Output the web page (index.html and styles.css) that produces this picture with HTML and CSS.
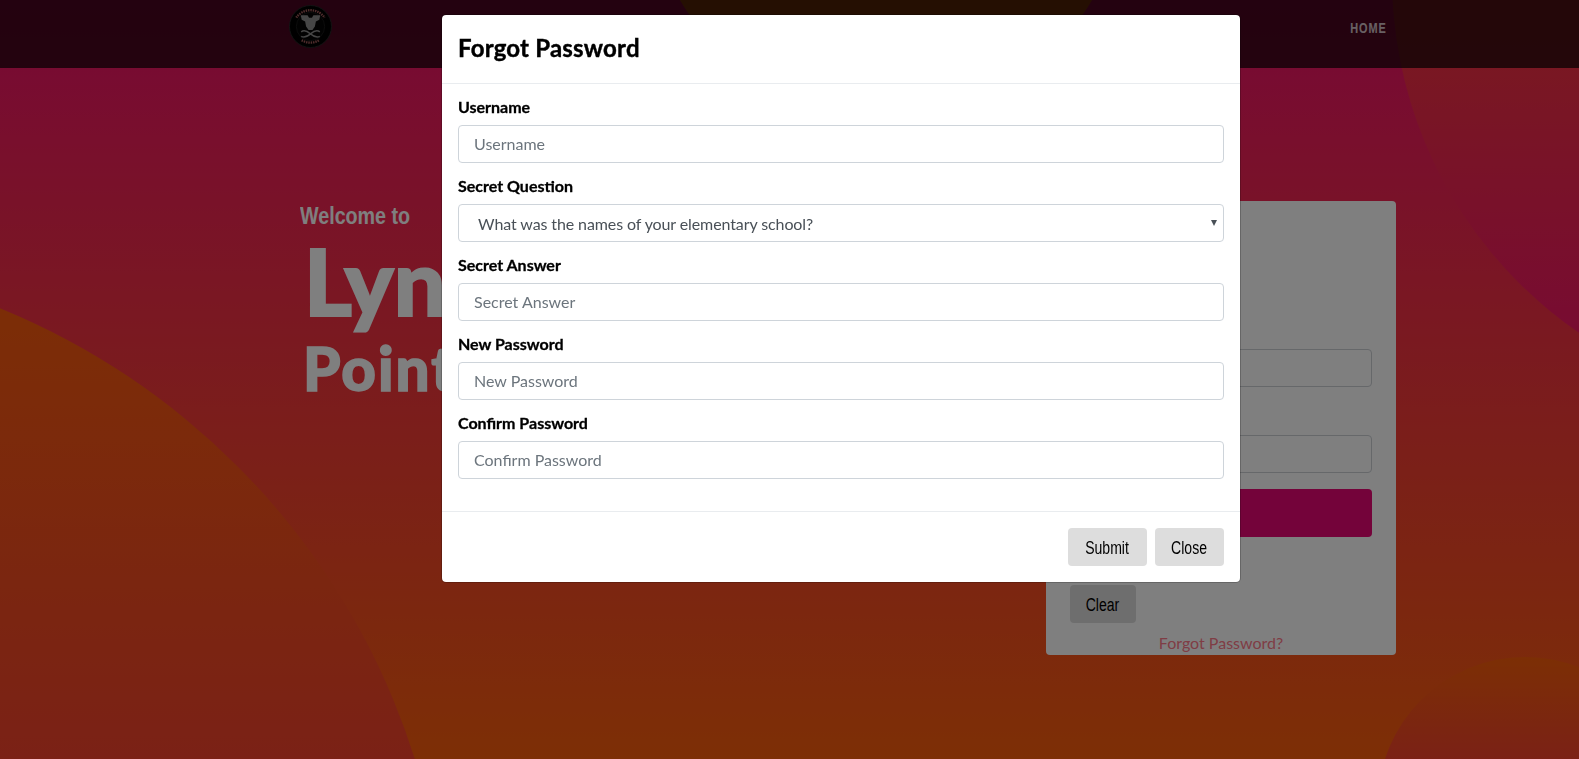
FILE: index.html
```html
<!DOCTYPE html>
<html lang="en">
<head>
<meta charset="utf-8">
<title>Forgot Password</title>
<link rel="stylesheet" href="styles.css">
</head>
<body>
<div class="backdrop">
  <div class="blob blob-top"></div>
  <div class="blob blob-right"></div>
  <div class="blob blob-left"></div>
  <div class="blob blob-corner"></div>
</div>

<nav class="nav">
  <svg class="logo" viewBox="0 0 44 44" aria-hidden="true">
    <circle cx="22" cy="22" r="21.500" fill="#000" stroke="#262626" stroke-width="1"/>
    <circle cx="22" cy="22" r="14.500" fill="#050505" stroke="#262626" stroke-width="0.600"/>
    <path d="M7.500 13 A17.500 17.500 0 0 1 36.500 13" fill="none" stroke="#a05a5a" stroke-width="2.400" stroke-dasharray="1.500 0.900"/>
    <path d="M13 36 A17.500 17.500 0 0 0 31 36" fill="none" stroke="#a05a5a" stroke-width="2.400" stroke-dasharray="1.500 0.900"/>
    <path d="M12 10.500 H19 L20.500 13 H23.500 L25 10.500 H32 L31 15 L27.500 17 L26.500 22 L24 25.500 H20 L17.500 22 L16.500 17 L13 15 Z" fill="#8c8c8c"/>
    <path d="M12.500 27.500 C15 25.500 19 27 22 29.500 C25 27 29 25.500 31.500 27.500 M12.500 32 C15 33.500 19 32 22 29.500 C25 32 29 33.500 31.500 32" fill="none" stroke="#8c8c8c" stroke-width="1.500"/>
  </svg>
  <a class="nav-link" href="#"><span class="narrow narrow-right">HOME</span></a>
</nav>

<main class="main">
  <section class="hero">
    <p class="hero-welcome"><span class="narrow">Welcome to</span></p>
    <h1 class="hero-title">Lyn</h1>
    <h2 class="hero-sub">Point</h2>
  </section>
  <section class="card">
    <div class="card-field"><label class="card-label">Username</label><input class="card-input" type="text"></div>
    <div class="card-field"><label class="card-label">Password</label><input class="card-input" type="password"></div>
    <button class="login" type="button"><span class="narrow">Login</span></button>
    <button class="btn btn-clear" type="button"><span class="narrow">Clear</span></button>
    <a class="card-link" href="#">Forgot Password?</a>
  </section>
</main>

<div class="overlay">
  <div class="modal">
    <header class="modal-header">
      <h3 class="modal-title">Forgot Password</h3>
    </header>
    <form class="modal-body">
      <div class="group">
        <label class="label" for="u">Username</label>
        <input class="field" id="u" type="text" placeholder="Username">
      </div>
      <div class="group">
        <label class="label" for="q">Secret Question</label>
        <div class="select-wrap">
          <select class="field field-select" id="q">
            <option>What was the names of your elementary school?</option>
          </select>
        </div>
      </div>
      <div class="group">
        <label class="label" for="a">Secret Answer</label>
        <input class="field" id="a" type="text" placeholder="Secret Answer">
      </div>
      <div class="group">
        <label class="label" for="n">New Password</label>
        <input class="field" id="n" type="password" placeholder="New Password">
      </div>
      <div class="group">
        <label class="label" for="c">Confirm Password</label>
        <input class="field" id="c" type="password" placeholder="Confirm Password">
      </div>
    </form>
    <footer class="modal-footer">
      <button class="btn btn-submit" type="button"><span class="narrow">Submit</span></button>
      <button class="btn btn-close" type="button"><span class="narrow">Close</span></button>
    </footer>
  </div>
</div>
</body>
</html>
```

FILE: styles.css
```css
* { box-sizing: border-box; }

html, body {
  margin: 0;
  height: 100%;
  overflow: hidden;
}

body {
  position: relative;
  font-family: Lato, "Liberation Sans", sans-serif;
  font-size: 16px;
  color: #000;
  background: linear-gradient(180deg, #f0106c 0%, #fb5e0c 100%);
}

.backdrop {
  position: absolute;
  inset: 0;
  overflow: hidden;
}

.blob {
  position: absolute;
  border-radius: 50%;
  background: linear-gradient(180deg, #f95e0a 0%, #f0106c 100%);
}

.blob-top {
  left: 647px;
  top: -360px;
  width: 478px;
  height: 478px;
  background: #f96a12;
}

.blob-right { left: 1392px; top: -455px; width: 864px; height: 864px; }
.blob-left { left: -992px; top: 255px; width: 1440px; height: 1440px; }
.blob-corner { left: 1378px; top: 657px; width: 294px; height: 294px; }

.narrow {
  display: inline-block;
  font-family: "Liberation Sans", sans-serif;
  transform: scaleX(0.78);
}

.narrow-right { transform-origin: right center; }

.nav {
  position: relative;
  display: flex;
  align-items: flex-start;
  justify-content: space-between;
  height: 68px;
  padding: 5px 192px 0 289px;
  background: rgba(0, 0, 0, 0.7);
}

.logo { width: 43px; height: 43px; display: block; }

.nav-link {
  margin-top: 14px;
  font-family: "Liberation Sans", sans-serif;
  font-size: 14px;
  font-weight: 700;
  line-height: 18px;
  letter-spacing: 1.2px;
  color: #fff;
  opacity: 0.75;
  text-decoration: none;
}

.main {
  position: relative;
  display: flex;
  justify-content: space-between;
  align-items: flex-start;
  padding: 132px 183px 0 300px;
}

.hero { color: #fff; }

.hero-welcome {
  margin: 0;
  font-size: 24px;
  font-weight: 700;
  line-height: 30px;
}

.hero-welcome .narrow { transform-origin: left center; transform: scaleX(0.82); }

.hero-title {
  margin: 4px 0 0 4px;
  font-family: "Lato Black", Lato, sans-serif;
  font-size: 92px;
  font-weight: 900;
  line-height: 92px;
  letter-spacing: 0.5px;
  -webkit-text-stroke: 2px #fff;
}

.hero-sub {
  margin: 10px 0 0 3px;
  font-family: "Lato Black", Lato, sans-serif;
  font-size: 60px;
  font-weight: 900;
  line-height: 62px;
  letter-spacing: 2px;
  -webkit-text-stroke: 1.5px #fff;
}

.card {
  display: flex;
  flex-direction: column;
  align-items: flex-start;
  width: 350px;
  height: 454px;
  margin-top: 1px;
  padding: 124px 24px 0;
  background: #fff;
  border-radius: 4px;
}

.card-field { width: 100%; margin-bottom: 24px; }
.card-field + .card-field { margin-bottom: 16px; }

.card-label {
  display: block;
  height: 24px;
  line-height: 24px;
  font-weight: 700;
}

.card-input {
  display: block;
  width: 100%;
  height: 38px;
  border: 1px solid #ccd0d5;
  border-radius: 4px;
  background: #fff;
}

.login {
  width: 100%;
  height: 48px;
  margin-bottom: 48px;
  border: 0;
  border-radius: 4px;
  background: #e90675;
  color: #fff;
  font-size: 18px;
}

.btn {
  height: 38px;
  padding: 3px 0 0;
  border: 0;
  border-radius: 4px;
  background: #ddd;
  color: #000;
  font-size: 18px;
}

.btn-submit { width: 79px; }
.btn-close { width: 69px; }
.btn-clear { width: 66px; }

.card-link {
  align-self: center;
  margin-top: 10px;
  line-height: 20px;
  color: #ff7a8a;
  text-decoration: none;
}

.overlay {
  position: fixed;
  inset: 0;
  background: rgba(0, 0, 0, 0.5);
  padding: 14px 0 0 441px;
}

.modal {
  width: 800px;
  height: 569px;
  background: #fff;
  border: 1px solid rgba(0, 0, 0, 0.2);
  border-radius: 5px;
  background-clip: padding-box;
}

.modal-header {
  height: 69px;
  padding: 0 16px 3px;
  display: flex;
  align-items: center;
  border-bottom: 1px solid #e9ecef;
}

.modal-title {
  margin: 0;
  font-size: 24px;
  font-weight: 700;
  line-height: 32px;
  letter-spacing: 0.2px;
  -webkit-text-stroke: 0.4px #000;
}

.modal-body {
  padding: 14px 16px 18px;
}

.group { margin-bottom: 14px; }

.label {
  display: block;
  margin-bottom: 9px;
  font-size: 16px;
  font-weight: 700;
  line-height: 18px;
  -webkit-text-stroke: 0.3px #000;
}

.field {
  display: block;
  width: 100%;
  height: 38px;
  padding: 0 15px 2px;
  border: 1px solid #ced4da;
  border-radius: 4px;
  background: #fff;
  font-family: Lato, "Liberation Sans", sans-serif;
  font-size: 16px;
  color: #495057;
}

.field::placeholder { color: #6c757d; opacity: 1; }

.select-wrap { position: relative; }

.select-wrap::after {
  content: "";
  position: absolute;
  top: 16px;
  right: 7px;
  border-left: 3px solid transparent;
  border-right: 3px solid transparent;
  border-top: 6px solid #495057;
}

.field-select {
  appearance: none;
  -webkit-appearance: none;
  padding: 0 15px 0 19px;
  letter-spacing: -0.1px;
}

.modal-footer {
  display: flex;
  justify-content: flex-end;
  gap: 8px;
  padding: 16px 16px 0;
  border-top: 1px solid #e9ecef;
}
```
